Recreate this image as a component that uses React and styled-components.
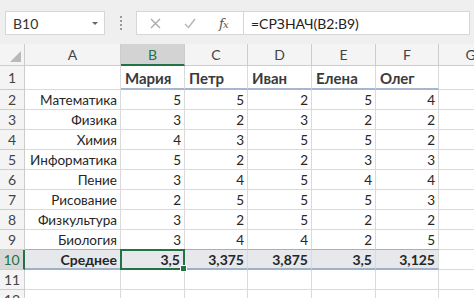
import React from "react";
import styled, { createGlobalStyle, css } from "styled-components";

const Global = createGlobalStyle`
  html, body { margin: 0; padding: 0; background: #ffffff; overflow: hidden; }
  body { font-family: Lato, "Open Sans", "Liberation Sans", sans-serif; }
`;

const Page = styled.div`
  width: 474px;
  height: 298px;
  overflow: hidden;
  background: #fff;
`;

const Toolbar = styled.div`
  height: 44px;
  background: #efefef;
  display: flex;
  align-items: flex-start;
  padding: 11px 0 0 5px;
  box-sizing: border-box;
`;

const NameBox = styled.div`
  width: 100px;
  height: 24px;
  box-sizing: border-box;
  background: #fff;
  border: 1px solid #d6d6d6;
  display: flex;
  align-items: center;
  justify-content: space-between;
  padding: 0 6px 0 7px;
  font-size: 14px;
  color: #333;
`;

const Caret = styled.span`
  width: 0;
  height: 0;
  border-left: 3px solid transparent;
  border-right: 3px solid transparent;
  border-top: 3px solid #666;
`;

const Grip = styled.div`
  width: 31px;
  height: 24px;
  display: flex;
  flex-direction: column;
  align-items: center;
  justify-content: center;
  gap: 2px;
  span {
    width: 2px;
    height: 2px;
    background: #9a9a9a;
  }
`;

const FormulaBox = styled.div`
  flex: 1;
  height: 24px;
  box-sizing: border-box;
  background: #fff;
  border: 1px solid #d6d6d6;
  margin-right: 4px;
  display: flex;
  align-items: center;
`;

const Buttons = styled.div`
  width: 107px;
  display: flex;
  align-items: center;
  justify-content: space-around;
  padding: 0 4px 0 2px;
  box-sizing: border-box;
  height: 100%;
  border-right: 1px solid #d6d6d6;
`;

const Fx = styled.span`
  font-family: "DejaVu Serif", "Liberation Serif", serif;
  font-style: italic;
  font-size: 13px;
  color: #555;
  letter-spacing: -1px;
  small { font-size: 10px; }
`;

const Formula = styled.div`
  padding-left: 7px;
  font-size: 14px;
  color: #222;
`;

const Sheet = styled.div`
  display: grid;
  grid-template-columns: 25px 96px 64px 63px 64px 64px 63px 64px;
  grid-template-rows: 22px 24px repeat(11, 20px);
`;

const Cell = styled.div`
  box-sizing: border-box;
  border-right: 1px solid #dadada;
  border-bottom: 1px solid #dadada;
  font-size: 13.5px;
  color: #262626;
  display: flex;
  align-items: center;
  justify-content: ${(p) => (p.$align === "left" ? "flex-start" : "flex-end")};
  padding: 0 3px 0 4px;
  white-space: nowrap;
  overflow: hidden;
  position: relative;
  ${(p) =>
    p.$name &&
    css`
      font-weight: bold;
      font-size: 15px;
      color: #3a3a3a;
      border-bottom: 2px solid #a7b6cf;
      padding-top: 2px;
    `}
  ${(p) =>
    p.$total &&
    css`
      font-weight: bold;
      font-size: 14px;
      background: #e6e8ec;
      border-top: 1px solid #9fb0c9;
      border-bottom: 2px solid #9fb0c9;
      margin-top: -1px;
    `}
  ${(p) =>
    p.$active &&
    css`
      border: 2px solid #217346;
      margin-left: -1px;
      overflow: visible;
    `}
`;

const ColHead = styled.div`
  box-sizing: border-box;
  background: ${(p) => (p.$sel ? "#d3d3d3" : "#f4f4f4")};
  color: ${(p) => (p.$sel ? "#217346" : "#444")};
  border-right: 1px solid #cdcdcd;
  border-bottom: ${(p) => (p.$sel ? "2px solid #217346" : "1px solid #cdcdcd")};
  font-size: 14px;
  display: flex;
  align-items: center;
  justify-content: center;
  position: relative;
`;

const RowHead = styled.div`
  box-sizing: border-box;
  background: ${(p) => (p.$sel ? "#d8d8d8" : "#f4f4f4")};
  color: ${(p) => (p.$sel ? "#217346" : "#444")};
  border-right: ${(p) => (p.$sel ? "2px solid #217346" : "1px solid #cdcdcd")};
  border-bottom: 1px solid #cdcdcd;
  font-size: 14px;
  display: flex;
  align-items: center;
  justify-content: center;
`;

const Corner = styled(ColHead)`
  &::after {
    content: "";
    position: absolute;
    right: 3px;
    bottom: 3px;
    width: 0;
    height: 0;
    border-left: 11px solid transparent;
    border-bottom: 11px solid #b9b9b9;
  }
`;

const Handle = styled.span`
  position: absolute;
  right: -4px;
  bottom: -4px;
  width: 5px;
  height: 5px;
  background: #217346;
  border: 1px solid #fff;
  z-index: 2;
`;

const cols = ["A", "B", "C", "D", "E", "F", "G"];
const names = ["", "Мария", "Петр", "Иван", "Елена", "Олег", ""];
const rows = [
  ["Математика", 5, 5, 2, 5, 4],
  ["Физика", 3, 2, 3, 2, 2],
  ["Химия", 4, 3, 5, 5, 2],
  ["Информатика", 5, 2, 2, 3, 3],
  ["Пение", 3, 4, 5, 4, 4],
  ["Рисование", 2, 5, 5, 5, 3],
  ["Физкультура", 3, 2, 5, 2, 2],
  ["Биология", 3, 4, 4, 2, 5],
];
const totals = ["Среднее", "3,5", "3,375", "3,875", "3,5", "3,125"];

export default function App() {
  return (
    <Page>
      <Global />
      <Toolbar>
        <NameBox>
          B10
          <Caret />
        </NameBox>
        <Grip>
          <span />
          <span />
          <span />
          <span />
        </Grip>
        <FormulaBox>
          <Buttons>
            <svg width="11" height="11" viewBox="0 0 11 11">
              <path d="M1 1 L10 10 M10 1 L1 10" stroke="#a9a9a9" strokeWidth="1.3" fill="none" />
            </svg>
            <svg width="12" height="11" viewBox="0 0 12 11">
              <path d="M1 6 L4.5 9.5 L11 1" stroke="#b5b5b5" strokeWidth="1.4" fill="none" />
            </svg>
            <Fx>
              f<small>x</small>
            </Fx>
          </Buttons>
          <Formula>=СРЗНАЧ(B2:B9)</Formula>
        </FormulaBox>
      </Toolbar>
      <Sheet>
        <Corner />
        {cols.map((c) => (
          <ColHead key={c} $sel={c === "B"}>
            {c}
          </ColHead>
        ))}

        <RowHead>1</RowHead>
        {names.map((n, i) =>
          i === 0 || i === 6 ? (
            <Cell key={i} />
          ) : (
            <Cell key={i} $name $align="left">
              {n}
            </Cell>
          )
        )}

        {rows.map((r, ri) => (
          <React.Fragment key={ri}>
            <RowHead>{ri + 2}</RowHead>
            {r.map((v, ci) => (
              <Cell key={ci}>{v}</Cell>
            ))}
            <Cell />
          </React.Fragment>
        ))}

        <RowHead $sel>10</RowHead>
        {totals.map((v, ci) => (
          <Cell key={ci} $total $active={ci === 1}>
            {v}
            {ci === 1 && <Handle />}
          </Cell>
        ))}
        <Cell />

        {[11, 12].map((n) => (
          <React.Fragment key={n}>
            <RowHead>{n}</RowHead>
            {cols.map((c) => (
              <Cell key={c} />
            ))}
          </React.Fragment>
        ))}
      </Sheet>
    </Page>
  );
}
